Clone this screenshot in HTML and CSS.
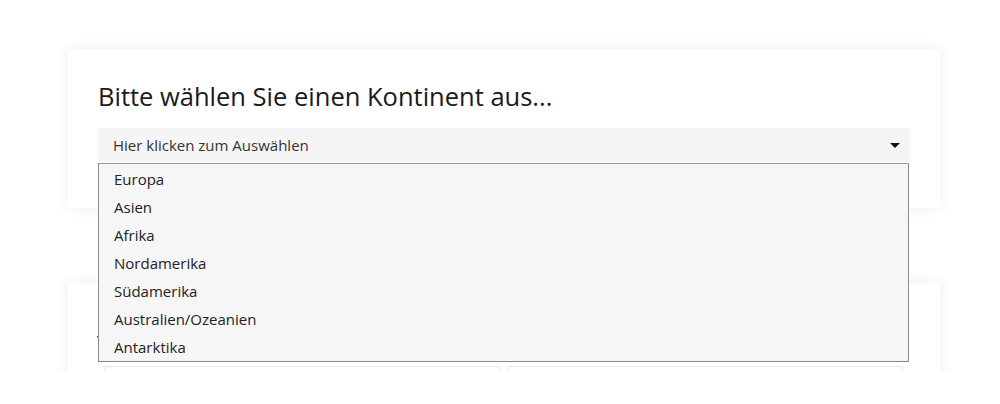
FILE: index.html
```html
<!DOCTYPE html>
<html lang="de">
<head>
<meta charset="utf-8">
<title>Kontinent auswählen</title>
<link rel="stylesheet" href="styles.css">
</head>
<body>
<div class="page">
  <section class="card card-first">
    <h1 class="title">Bitte wählen Sie einen Kontinent aus...</h1>
    <div class="select">
      <div class="select-box">
        <span class="select-label">Hier klicken zum Auswählen</span>
        <span class="caret"></span>
      </div>
      <ul class="options">
        <li>Europa</li>
        <li>Asien</li>
        <li>Afrika</li>
        <li>Nordamerika</li>
        <li>Südamerika</li>
        <li>Australien/Ozeanien</li>
        <li>Antarktika</li>
      </ul>
    </div>
  </section>
  <section class="card card-second">
    <h2 class="subtitle">Tragen Sie Ihre Daten ein</h2>
    <div class="fields">
      <div class="field"></div>
      <div class="field"></div>
    </div>
  </section>
</div>
</body>
</html>
```
FILE: styles.css
```css
html, body {
  margin: 0;
  padding: 0;
  background: #ffffff;
}
body {
  font-family: "Open Sans", "Noto Sans", sans-serif;
  color: #222;
}
.page {
  height: 371px;
  overflow: hidden;
  padding: 50px 60px 0 68px;
  box-sizing: border-box;
}
.card {
  background: #fff;
  box-shadow: 0 0 14px rgba(0, 0, 0, 0.07);
}
.card-first {
  padding: 26px 30px 46px 30px;
  position: relative;
  z-index: 2;
}
.title {
  margin: 0 0 12px 0;
  font-size: 25.5px;
  font-weight: 400;
  line-height: 40px;
  color: #1a1a1a;
}
.select {
  position: relative;
}
.select-box {
  height: 34px;
  background: #f5f5f5;
  display: flex;
  align-items: center;
  justify-content: space-between;
  padding: 0 10px 0 15px;
  box-sizing: border-box;
}
.select-label {
  font-size: 15px;
  color: #333;
}
.caret {
  width: 0;
  height: 0;
  border-left: 5px solid transparent;
  border-right: 5px solid transparent;
  border-top: 5px solid #111;
  margin-top: 1px;
}
.options {
  position: absolute;
  left: 0;
  right: 1px;
  top: 35px;
  margin: 0;
  padding: 1px 0 0 0;
  list-style: none;
  background: #f6f6f6;
  border: 1px solid #8a8a8a;
  border-top-color: #9a9a9a;
}
.options li {
  height: 28px;
  line-height: 28px;
  padding-left: 15px;
  font-size: 15px;
  color: #222;
}
.card-second {
  margin-top: 75px;
  padding: 40px 37px 0 36px;
  height: 200px;
}
.subtitle {
  margin: 0 0 3px -7px;
  font-size: 20px;
  font-weight: 400;
  line-height: 40px;
  color: #1a1a1a;
}
.fields {
  display: flex;
  gap: 7px;
}
.field {
  flex: 1;
  height: 36px;
  border: 1px solid #e6e6e6;
  border-radius: 2px;
}
```
